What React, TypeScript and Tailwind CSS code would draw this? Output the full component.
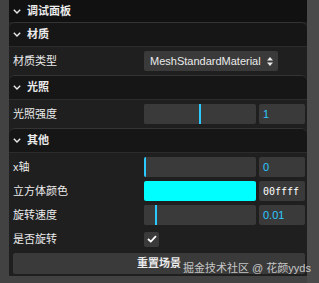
import React from "react";

const NUM = "text-[#2cc9ff]";

function Chevron() {
  return (
    <svg width="8" height="5" viewBox="0 0 8 5" className="mr-[6px] shrink-0">
      <polyline points="0.8,0.8 4,4 7.2,0.8" fill="none" stroke="#ebebeb" strokeWidth="1.4" />
    </svg>
  );
}

function Folder({ title, children, className = "" }: { title: string; children: React.ReactNode; className?: string }) {
  return (
    <div className={className}>
      <div className="flex h-[24px] items-center rounded-t-[6px] border-t border-[#343434] bg-[#161616] pl-[4px] font-bold">
        <Chevron />
        {title}
      </div>
      <div className="border-t border-[#2c2c2c]">{children}</div>
    </div>
  );
}

function Row({ label, children, h = "h-[24px]" }: { label: string; children: React.ReactNode; h?: string }) {
  return (
    <div className={`flex items-center pr-[2px] pl-[4px] ${h}`}>
      <div className="w-[131px] shrink-0">{label}</div>
      <div className="flex flex-1 items-center gap-[3px]">{children}</div>
    </div>
  );
}

function Slider({ fill, value }: { fill: number; value: string }) {
  return (
    <>
      <div className="h-[20px] w-[112px] overflow-hidden rounded-[2px] bg-[#3a3a3a]">
        <div className="h-full border-r-2 border-[#2cc9ff] bg-[#3a3a3a]" style={{ width: fill }} />
      </div>
      <div className={`flex h-[20px] flex-1 items-center rounded-[2px] bg-[#3a3a3a] pl-[4px] ${NUM}`}>{value}</div>
    </>
  );
}

export default function App() {
  return (
    <div className="relative flex h-[283px] w-[319px] overflow-hidden bg-[#424242] font-['Liberation_Sans','Noto_Sans_CJK_SC',sans-serif] text-[11px] text-[#ebebeb]">
      <div className="ml-[9px] h-[276px] w-[298px] bg-[#1f1f1f]">
        <div className="flex h-[22px] items-center bg-[#111111] pl-[4px] font-bold">
          <Chevron />
          调试面板
        </div>

        <Folder title="材质">
          <Row label="材质类型" h="h-[28px]">
            <div className="flex h-[20px] w-[134px] items-center justify-between rounded-[2px] bg-[#3a3a3a] pr-[5px] pl-[6px]">
              <span>MeshStandardMaterial</span>
              <svg width="6" height="9" viewBox="0 0 6 9">
                <polygon points="3,0 6,3.5 0,3.5" fill="#ebebeb" />
                <polygon points="0,5.5 6,5.5 3,9" fill="#ebebeb" />
              </svg>
            </div>
          </Row>
        </Folder>

        <Folder title="光照">
          <Row label="光照强度" h="h-[28px]">
            <Slider fill={57} value="1" />
          </Row>
        </Folder>

        <Folder title="其他">
          <div className="pt-[2px] pb-[1px]">
            <Row label="x轴">
              <Slider fill={2} value="0" />
            </Row>
            <Row label="立方体颜色">
              <div className="h-[20px] w-[112px] rounded-[2px] bg-[#00ffff]" />
              <div className="flex h-[20px] flex-1 items-center rounded-[2px] bg-[#3a3a3a] pl-[4px] font-['DejaVu_Sans_Mono',monospace] text-[10px] text-white">
                00ffff
              </div>
            </Row>
            <Row label="旋转速度">
              <Slider fill={13} value="0.01" />
            </Row>
            <Row label="是否旋转">
              <div className="flex h-[15px] w-[15px] items-center justify-center rounded-[2px] bg-[#3a3a3a]">
                <svg width="10" height="8" viewBox="0 0 10 8">
                  <polyline points="1,4 3.8,6.6 9,1.2" fill="none" stroke="white" strokeWidth="1.8" />
                </svg>
              </div>
            </Row>
            <div className="flex h-[24px] items-center pr-[2px] pl-[4px]">
              <div className="flex h-[21px] flex-1 items-center justify-center rounded-[2px] bg-[#3a3a3a] font-bold">
                重置场景
              </div>
            </div>
          </div>
        </Folder>
      </div>
      <div className="w-[12px] bg-[#4a4a4a]" />

      <div className="absolute top-[260px] left-[183px] text-[11px] leading-[16px] text-[#e2e2e2]/85">
        掘金技术社区 @ 花颜yyds
      </div>
    </div>
  );
}
